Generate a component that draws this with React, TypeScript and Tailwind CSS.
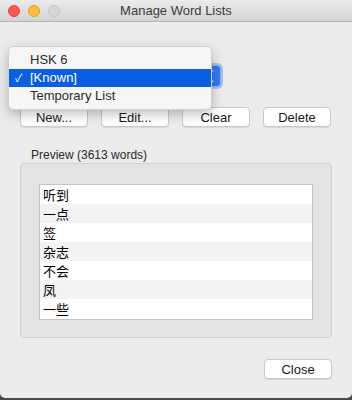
import React from 'react';

const words = ['听到', '一点', '签', '杂志', '不会', '凤', '一些'];

const font = { fontFamily: '"Helvetica Neue", "Liberation Sans", "Noto Sans CJK SC", sans-serif' };

function MacButton({ label, className = '' }: { label: string; className?: string }) {
  return (
    <button
      className={`h-[20px] w-[68px] rounded-[4px] border border-[#c8c8c8] bg-white pt-[1px] text-[13px] leading-none text-[#1a1a1a] shadow-[0_1px_0_rgba(0,0,0,0.08)] ${className}`}
    >
      {label}
    </button>
  );
}

function TrafficLights() {
  return (
    <div className="flex items-center gap-[8px] pl-[8px]">
      <span className="h-[12px] w-[12px] rounded-full border border-[#e2463f] bg-[#fc5753]" />
      <span className="h-[12px] w-[12px] rounded-full border border-[#e1a116] bg-[#fdbc40]" />
      <span className="h-[12px] w-[12px] rounded-full border border-[#c6c6c6] bg-[#d6d6d6]" />
    </div>
  );
}

export default function App() {
  return (
    <div className="h-[400px] w-[352px] bg-[#4a4a4a]" style={font}>
      <div className="relative flex h-[398px] w-[352px] flex-col overflow-hidden rounded-b-[5px] bg-[#ececec]">
        {/* title bar */}
        <div className="relative flex h-[22px] items-center border-b border-[#b4b4b4] bg-gradient-to-b from-[#ebebeb] to-[#d3d3d3]">
          <TrafficLights />
          <div className="absolute inset-0 flex items-center justify-center text-[13px] text-[#3c3c3c]">
            Manage Word Lists
          </div>
        </div>

        <div className="flex flex-1 flex-col px-[20px]">
          {/* current list */}
          <div className="mt-[22px] pl-[2px] text-[12px] leading-[14px] text-[#222]">Current word list:</div>
          <div className="mt-[7px] flex h-[22px] w-[201px] items-center justify-end rounded-[4px] border border-[#c8c8c8] bg-white">
            <div className="flex h-[20px] w-[17px] flex-col items-center justify-center rounded-r-[3px] bg-[#2f7cf6] text-[7px] leading-[6px] text-white shadow-[0_0_0_3px_rgba(70,140,250,0.45)]">
              <span>⌃</span>
              <span className="rotate-180">⌃</span>
            </div>
          </div>

          {/* buttons */}
          <div className="mt-[20px] flex gap-[13px]">
            <MacButton label="New..." />
            <MacButton label="Edit..." />
            <MacButton label="Clear" />
            <MacButton label="Delete" />
          </div>

          {/* preview */}
          <div className="mt-[21px] pl-[11px] text-[12px] leading-[14px] text-[#2a2a2a]">Preview (3613 words)</div>
          <div className="mt-[1px] h-[175px] w-[312px] rounded-[4px] border border-[#d3d3d3] bg-[#e3e3e3] px-[18px] pt-[20px]">
            <div className="h-[136px] w-[274px] border border-[#c2c2c2] bg-white">
              {words.map((w, i) => (
                <div
                  key={w}
                  className={`flex h-[19px] items-center pl-[3px] text-[13px] text-black ${i % 2 === 1 ? 'bg-[#f3f3f3]' : 'bg-white'}`}
                  style={{ fontFamily: '"Noto Sans CJK SC", sans-serif' }}
                >
                  {w}
                </div>
              ))}
            </div>
          </div>

          <div className="mt-[21px] flex justify-end">
            <MacButton label="Close" />
          </div>
        </div>

        {/* open popup menu */}
        <div className="absolute left-[8px] top-[46px] w-[204px] rounded-[5px] border border-[#d0d0d0] bg-[#f6f6f6] py-[4px] shadow-[0_4px_12px_rgba(0,0,0,0.25)]">
          <div className="flex h-[18px] items-center pl-[21px] text-[13px] text-[#2b2b2b]">HSK 6</div>
          <div className="relative flex h-[18px] items-center bg-[#0a5ee0] pl-[21px] text-[13px] text-white">
            <span className="absolute left-[6px] text-[11px]">✓</span>
            [Known]
          </div>
          <div className="flex h-[18px] items-center pl-[21px] text-[13px] text-[#2b2b2b]">Temporary List</div>
        </div>
      </div>
    </div>
  );
}
